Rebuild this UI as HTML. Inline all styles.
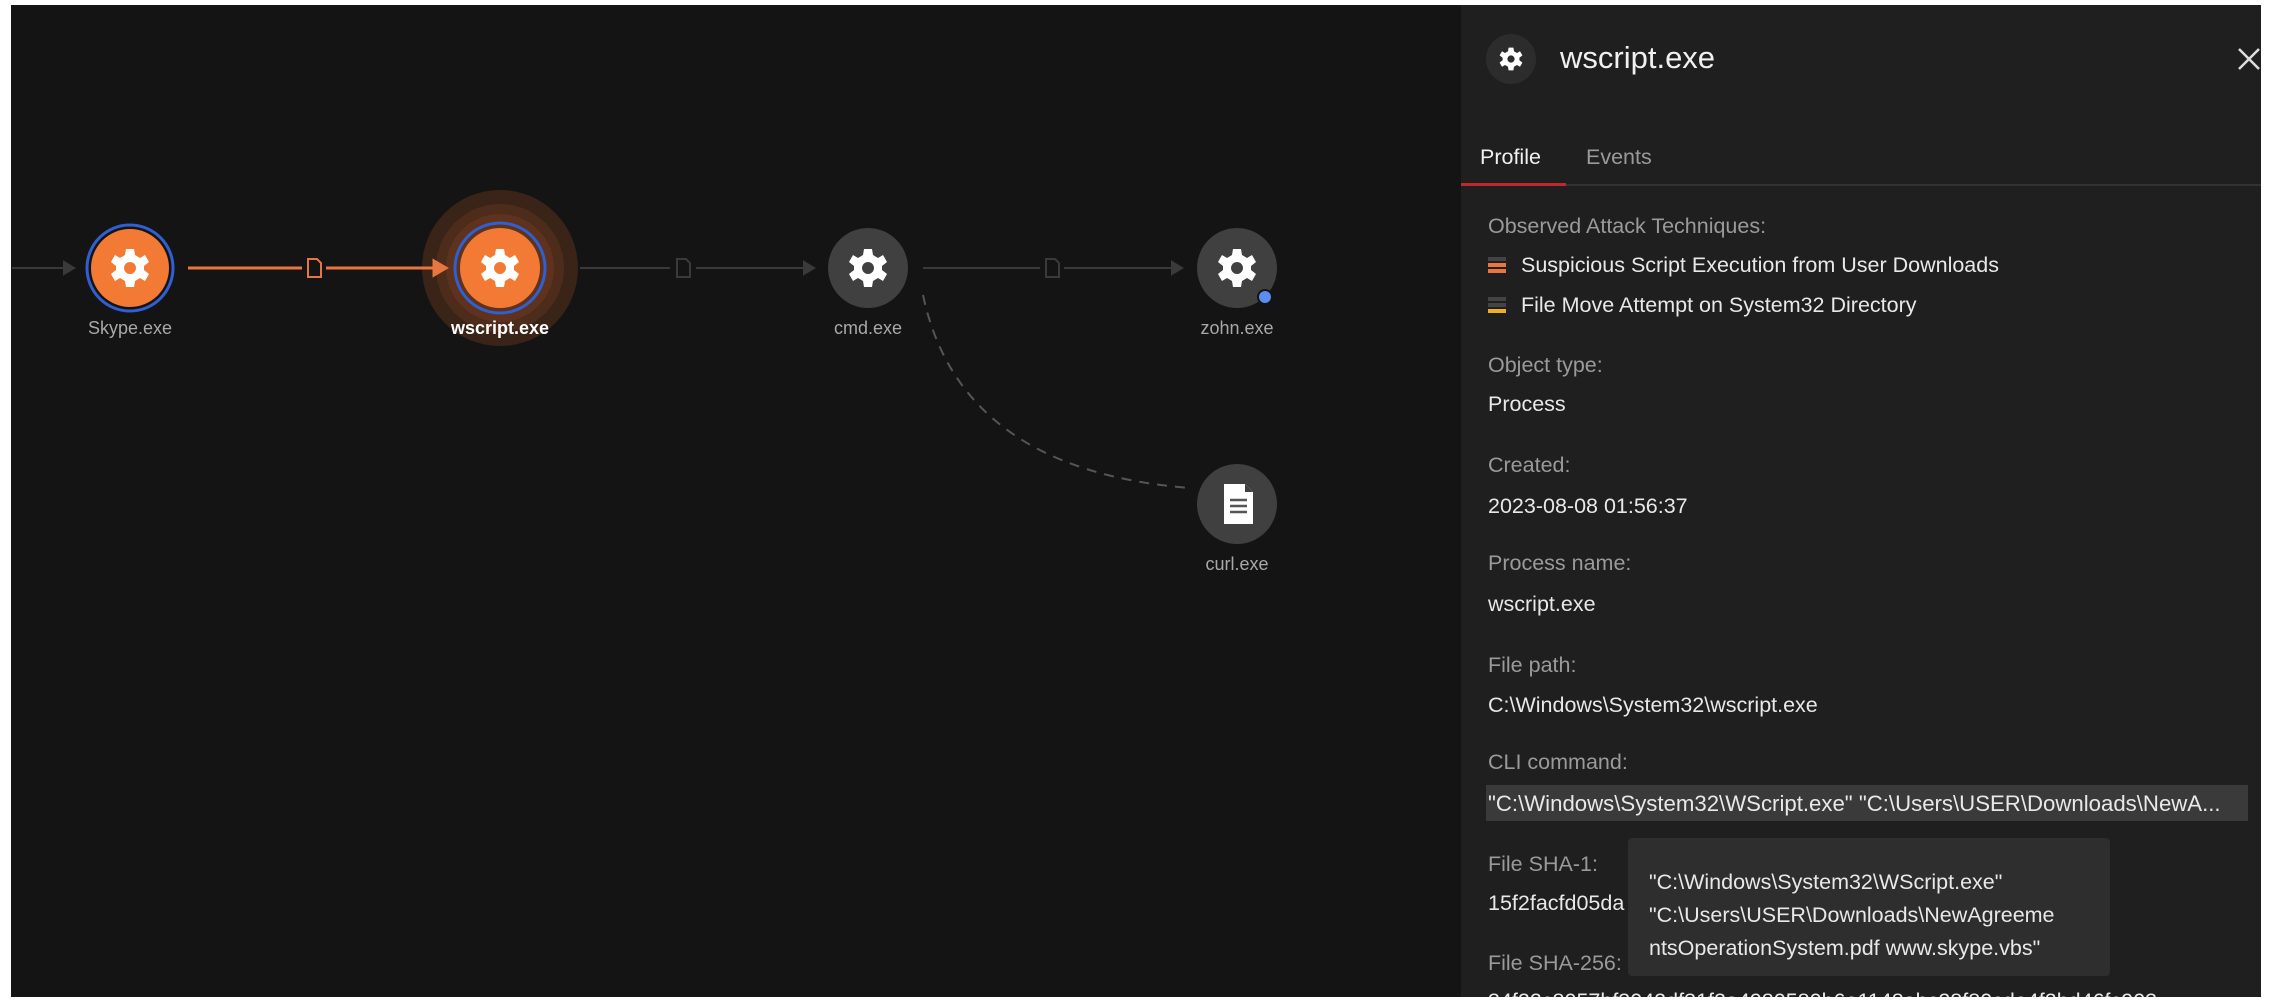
<!DOCTYPE html>
<html><head><meta charset="utf-8"><style>
html,body{margin:0;padding:0;background:#fff;}
body{width:2269px;height:1003px;position:relative;overflow:hidden;font-family:"Liberation Sans",sans-serif;}
#g{position:absolute;left:11px;top:5px;width:1450px;height:992px;background:#141414;}
#p{position:absolute;left:1461px;top:5px;width:800px;height:992px;background:#1f1f1f;overflow:hidden;}
.t{position:absolute;white-space:nowrap;}
.lab{color:#9a9a9a;font-size:21.5px;}
.val{color:#e8e8e8;font-size:21.5px;}
</style></head><body>
<div id="g"></div>
<svg style="position:absolute;left:0;top:0" width="1461" height="1003">
<defs>
<g id="gear"><path fill="#fff" fill-rule="evenodd" d="M-4,-19 L4,-19 L5,-13 L10,-10 L15,-13 L19,-6 L14,-2 L14,2 L19,6 L15,13 L10,10 L5,13 L4,19 L-4,19 L-5,13 L-10,10 L-15,13 L-19,6 L-14,2 L-14,-2 L-19,-6 L-15,-13 L-10,-10 L-5,-13 Z M0,-6 A6,6 0 1,0 0.01,-6 Z"/></g>
<g id="doc"><path d="M-6,-9 L3,-9 L7,-5 L7,9 L-6,9 Z" fill="none" stroke-width="2"/></g>
</defs>
<circle cx="500" cy="268" r="78" fill="#3a2418"/>
<circle cx="500" cy="268" r="64" fill="#4d2c1c"/>
<circle cx="500" cy="268" r="54" fill="#5e321c"/>
<g stroke="#3a3a3a" stroke-width="2" fill="#3a3a3a">
<line x1="12" y1="268" x2="66" y2="268"/><path d="M64,262 L74,268 L64,274 Z"/>
<line x1="580" y1="268" x2="670" y2="268"/><line x1="696" y1="268" x2="805" y2="268"/><path d="M804,262 L814,268 L804,274 Z"/>
<line x1="923" y1="268" x2="1040" y2="268"/><line x1="1064" y1="268" x2="1175" y2="268"/><path d="M1172,262 L1182,268 L1172,274 Z"/>
</g>
<use href="#doc" x="683" y="268" stroke="#3a3a3a"/>
<use href="#doc" x="1052" y="268" stroke="#3a3a3a"/>
<path d="M923,295 Q960,470 1190,488" fill="none" stroke="#555" stroke-width="2" stroke-dasharray="10,8"/>
<g stroke="#e8763e" stroke-width="3" fill="#e8763e">
<line x1="188" y1="268" x2="302" y2="268"/><line x1="326" y1="268" x2="436" y2="268"/><path d="M434,261 L446,268 L434,275 Z"/>
</g>
<use href="#doc" x="314" y="268" stroke="#e8763e"/>
<circle cx="130" cy="268" r="43" fill="none" stroke="#2f5fd0" stroke-width="3"/>
<circle cx="130" cy="268" r="39" fill="#f37a35"/>
<use href="#gear" x="130" y="268"/>
<circle cx="500" cy="268" r="45" fill="none" stroke="#2f5fd0" stroke-width="3"/>
<circle cx="500" cy="268" r="40" fill="#f37a35"/>
<use href="#gear" x="500" y="268"/>
<circle cx="868" cy="268" r="40" fill="#404040"/>
<use href="#gear" x="868" y="268"/>
<circle cx="1237" cy="268" r="40" fill="#404040"/>
<use href="#gear" x="1237" y="268"/>
<circle cx="1265" cy="297" r="7" fill="#5b8cf0" stroke="#141414" stroke-width="2"/>
<circle cx="1237" cy="504" r="40" fill="#404040"/>
<path d="M1224,484 L1245,484 L1253,492 L1253,524 L1224,524 Z" fill="#fff"/>
<path d="M1245,484 L1245,492 L1253,492" fill="#404040"/>
<g stroke="#555" stroke-width="2.5"><line x1="1230" y1="500" x2="1247" y2="500"/><line x1="1230" y1="506" x2="1247" y2="506"/><line x1="1230" y1="512" x2="1247" y2="512"/></g>
<g font-family="Liberation Sans,sans-serif" font-size="18" text-anchor="middle" fill="#a8a8a8">
<text x="130" y="334">Skype.exe</text>
<text x="500" y="334" fill="#fff" font-weight="bold">wscript.exe</text>
<text x="868" y="334">cmd.exe</text>
<text x="1237" y="334">zohn.exe</text>
<text x="1237" y="570">curl.exe</text>
</g>
</svg>
<div id="p">
<svg style="position:absolute;left:25px;top:29px" width="50" height="50"><circle cx="25" cy="25" r="25" fill="#2c2c2c"/><g transform="translate(25,25) scale(0.6)"><path fill="#fff" fill-rule="evenodd" d="M-4,-19 L4,-19 L5,-13 L10,-10 L15,-13 L19,-6 L14,-2 L14,2 L19,6 L15,13 L10,10 L5,13 L4,19 L-4,19 L-5,13 L-10,10 L-15,13 L-19,6 L-14,2 L-14,-2 L-19,-6 L-15,-13 L-10,-10 L-5,-13 Z M0,-6 A6,6 0 1,0 0.01,-6 Z"/></g></svg>
<div class="t" style="left:99px;top:35px;font-size:31px;color:#f0f0f0;">wscript.exe</div>
<svg style="position:absolute;left:776px;top:42px" width="24" height="24"><path d="M2,2 L22,22 M22,2 L2,22" stroke="#ddd" stroke-width="2.5"/></svg>
<div class="t" style="left:19px;top:140px;font-size:21.5px;color:#f0f0f0;">Profile</div>
<div class="t" style="left:125px;top:140px;font-size:21.5px;color:#9a9a9a;">Events</div>
<div style="position:absolute;left:0;top:179px;width:800px;height:2px;background:#333;"></div>
<div style="position:absolute;left:0;top:178px;width:105px;height:3px;background:#c0282e;"></div>
<div class="t lab" style="left:27px;top:209px;">Observed Attack Techniques:</div>
<div style="position:absolute;left:27px;top:252px;width:18px;height:4px;background:#444"></div>
<div style="position:absolute;left:27px;top:258px;width:18px;height:4px;background:#e8763e"></div>
<div style="position:absolute;left:27px;top:264px;width:18px;height:4px;background:#e8763e"></div>
<div class="t val" style="left:60px;top:248px;">Suspicious Script Execution from User Downloads</div>
<div style="position:absolute;left:27px;top:292px;width:18px;height:4px;background:#444"></div>
<div style="position:absolute;left:27px;top:298px;width:18px;height:4px;background:#444"></div>
<div style="position:absolute;left:27px;top:304px;width:18px;height:4px;background:#f0b020"></div>
<div class="t val" style="left:60px;top:288px;">File Move Attempt on System32 Directory</div>
<div class="t lab" style="left:27px;top:348px;">Object type:</div>
<div class="t val" style="left:27px;top:387px;">Process</div>
<div class="t lab" style="left:27px;top:448px;">Created:</div>
<div class="t val" style="left:27px;top:489px;">2023-08-08 01:56:37</div>
<div class="t lab" style="left:27px;top:546px;">Process name:</div>
<div class="t val" style="left:27px;top:587px;">wscript.exe</div>
<div class="t lab" style="left:27px;top:648px;">File path:</div>
<div class="t val" style="left:27px;top:688px;">C:\Windows\System32\wscript.exe</div>
<div class="t lab" style="left:27px;top:745px;">CLI command:</div>
<div style="position:absolute;left:25px;top:780px;width:762px;height:36px;background:#3a3a3a;"></div>
<div class="t val" style="left:27px;top:786px;font-size:22.2px;">"C:\Windows\System32\WScript.exe" "C:\Users\USER\Downloads\NewA...</div>
<div class="t lab" style="left:27px;top:847px;">File SHA-1:</div>
<div class="t val" style="left:27px;top:886px;">15f2facfd05da</div>
<div class="t lab" style="left:27px;top:946px;">File SHA-256:</div>
<div class="t val" style="left:27px;top:984px;">34f22c8057bf3042df31f2a4980580b6e1148abc28f80cde4f2bd46fc903</div>
<div style="position:absolute;left:167px;top:833px;width:482px;height:138px;background:#2e2e2e;border-radius:4px;"></div>
<div class="t val" style="left:188px;top:861px;line-height:33px;">"C:\Windows\System32\WScript.exe"<br>"C:\Users\USER\Downloads\NewAgreeme<br>ntsOperationSystem.pdf www.skype.vbs"</div>
</div>
</body></html>
